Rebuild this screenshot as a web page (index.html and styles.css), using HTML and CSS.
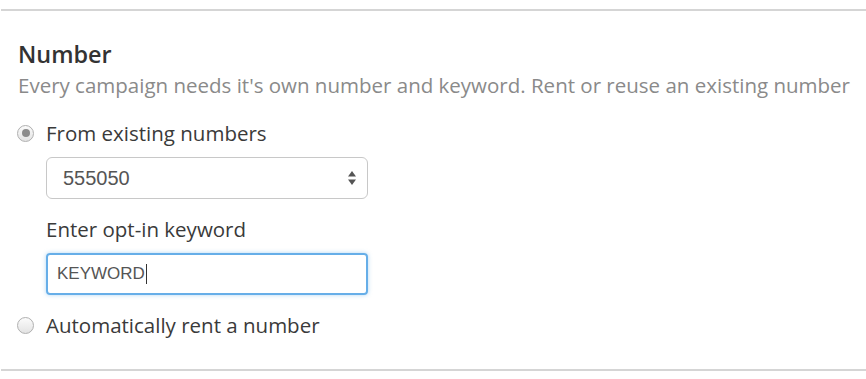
FILE: index.html
```html
<!DOCTYPE html>
<html lang="en">
<head>
  <meta charset="UTF-8">
  <title>Number</title>
  <link rel="stylesheet" href="styles.css">
</head>
<body>
  <div class="panel">
    <h2 class="panel-title">Number</h2>
    <p class="panel-desc">Every campaign needs it's own number and keyword. Rent or reuse an existing number</p>

    <label class="radio-row">
      <span class="radio checked"></span>
      <span class="radio-label">From existing numbers</span>
    </label>

    <div class="sub-fields">
      <div class="select-box">
        <span class="select-value">555050</span>
        <svg class="select-arrows" width="10" height="16" viewBox="0 0 10 16">
          <path d="M5 1 L9 6.5 L1 6.5 Z" fill="#555"></path>
          <path d="M5 15 L9 9.5 L1 9.5 Z" fill="#555"></path>
        </svg>
      </div>

      <div class="field-label">Enter opt-in keyword</div>
      <div class="text-input">
        <span class="input-value">KEYWORD</span><span class="caret"></span>
      </div>
    </div>

    <label class="radio-row radio-row-last">
      <span class="radio"></span>
      <span class="radio-label">Automatically rent a number</span>
    </label>
  </div>
</body>
</html>
```

FILE: styles.css
```css
:root {
  --text: #3a3a3a;
  --muted: #8a8a8a;
  --line: #d5d5d5;
  --focus: #66aee8;
}

* {
  margin: 0;
  padding: 0;
  box-sizing: border-box;
}

body {
  font-family: 'Open Sans', sans-serif;
  background: #fff;
  color: var(--text);
  padding-top: 9px;
}

.panel {
  margin-left: 1px;
  border-top: 2px solid var(--line);
  border-bottom: 2px solid var(--line);
  padding: 28px 0 30px 16px;
}

.panel-title {
  font-size: 23.4px;
  font-weight: 600;
  line-height: 30px;
  color: #333;
  padding-left: 1px;
}

.panel-desc {
  font-size: 20.5px;
  line-height: 28px;
  color: var(--muted);
  margin-top: 2px;
  padding-left: 1px;
}

.radio-row {
  display: flex;
  align-items: center;
  gap: 12px;
  margin-top: 20px;
  font-size: 20.5px;
  line-height: 28px;
  color: var(--text);
}

.radio-row-last {
  margin-top: 16px;
}

.radio {
  width: 17px;
  height: 17px;
  border-radius: 50%;
  border: 1px solid #b0b0b0;
  background: linear-gradient(#fbfbfb, #e3e3e3);
  display: flex;
  align-items: center;
  justify-content: center;
  flex-shrink: 0;
}

.radio.checked::after {
  content: '';
  width: 8px;
  height: 8px;
  border-radius: 50%;
  background: #8c8c8c;
}

.sub-fields {
  padding-left: 29px;
  width: 351px;
  margin-top: 10px;
}

.select-box {
  height: 42px;
  border: 1px solid #c8c8c8;
  border-radius: 6px;
  display: flex;
  align-items: center;
  justify-content: space-between;
  padding: 0 10px 0 16px;
  font-family: 'Liberation Sans', Arial, sans-serif;
  font-size: 20px;
  color: #555;
}

.field-label {
  font-size: 20.5px;
  line-height: 28px;
  margin-top: 16px;
}

.text-input {
  height: 42px;
  margin-top: 10px;
  border: 2px solid var(--focus);
  border-radius: 4px;
  box-shadow: 0 0 4px rgba(102, 174, 232, 0.5);
  display: flex;
  align-items: center;
  padding-left: 9px;
  font-family: 'Liberation Sans', Arial, sans-serif;
  font-size: 17px;
  color: #555;
}

.caret {
  width: 1px;
  height: 20px;
  background: #333;
  margin-left: 1px;
}
```
